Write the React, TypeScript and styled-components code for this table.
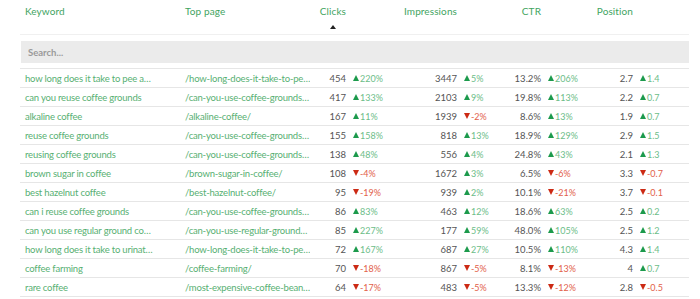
import React from "react";
import styled, { createGlobalStyle } from "styled-components";

const GlobalStyle = createGlobalStyle`
    body {
        margin: 0;
        background: #ffffff;
        font-family: Lato, "Open Sans", sans-serif;
    }
`;

const cols = "160px 130px 40px 55px 56px 44px 40px 50px 42px 52px";

const Wrapper = styled.div`
    width: 669px;
    margin-left: 20px;
`;

const HeaderRow = styled.div`
    display: grid;
    grid-template-columns: ${cols};
    height: 35px;
    border-bottom: 1px solid #f0f0f0;
    box-sizing: border-box;
`;

const HeadCell = styled.div<{ $right?: boolean }>`
    padding: 5px ${(p) => (p.$right ? "4px" : "5px")} 0 5px;
    font-size: 10px;
    letter-spacing: 0.1px;
    color: #3fa45f;
    white-space: nowrap;
    display: flex;
    flex-direction: column;
    align-items: ${(p) => (p.$right ? "flex-end" : "flex-start")};
`;

const SortArrow = styled.span`
    align-self: flex-end;
    margin-top: 8px;
    margin-right: 10px;
    width: 0;
    height: 0;
    border-left: 3px solid transparent;
    border-right: 3px solid transparent;
    border-bottom: 4px solid #222;
`;

const SearchBox = styled.input`
    display: block;
    width: 668px;
    height: 22px;
    margin: 6px 0 5px 1px;
    box-sizing: border-box;
    border: none;
    background: #ebebeb;
    padding: 0 7px;
    font-family: inherit;
    font-size: 9.5px;
    font-weight: 700;
    color: #555;
    outline: none;
    &::placeholder {
        color: #9a9a9a;
    }
`;

const Row = styled.div`
    display: grid;
    grid-template-columns: ${cols};
    height: 19px;
    border-top: 1px solid #e6e6e6;
    box-sizing: border-box;
    align-items: center;
    font-size: 9.5px;
    &:last-child {
        border-bottom: 1px solid #e6e6e6;
        height: 20px;
    }
`;

const TextCell = styled.div`
    padding-left: 5px;
    color: #58b073;
    white-space: nowrap;
    overflow: hidden;
    letter-spacing: -0.2px;
`;

const NumCell = styled.div`
    text-align: right;
    padding-right: 4px;
    color: #555;
    white-space: nowrap;
`;

const Change = styled.div<{ $down?: boolean }>`
    padding-left: 3px;
    color: ${(p) => (p.$down ? "#e2604a" : "#6cbd88")};
    white-space: nowrap;
    display: flex;
    align-items: center;
    font-size: 9px;
`;

const Tri = styled.span<{ $down?: boolean }>`
    width: 0;
    height: 0;
    margin-right: 1px;
    border-left: 3px solid transparent;
    border-right: 3px solid transparent;
    ${(p) =>
        p.$down
            ? "border-top: 6px solid #cc2a14;"
            : "border-bottom: 6px solid #1c9a4c;"}
`;

interface RowData {
    kw: string;
    page: string;
    clicks: string;
    dClicks: string;
    impr: string;
    dImpr: string;
    ctr: string;
    dCtr: string;
    pos: string;
    dPos: string;
}

const rows: RowData[] = [
    { kw: "how long does it take to pee a…", page: "/how-long-does-it-take-to-pe…", clicks: "454", dClicks: "220%", impr: "3447", dImpr: "5%", ctr: "13.2%", dCtr: "206%", pos: "2.7", dPos: "1.4" },
    { kw: "can you reuse coffee grounds", page: "/can-you-use-coffee-grounds…", clicks: "417", dClicks: "133%", impr: "2103", dImpr: "9%", ctr: "19.8%", dCtr: "113%", pos: "2.2", dPos: "0.7" },
    { kw: "alkaline coffee", page: "/alkaline-coffee/", clicks: "167", dClicks: "11%", impr: "1939", dImpr: "-2%", ctr: "8.6%", dCtr: "13%", pos: "1.9", dPos: "0.7" },
    { kw: "reuse coffee grounds", page: "/can-you-use-coffee-grounds…", clicks: "155", dClicks: "158%", impr: "818", dImpr: "13%", ctr: "18.9%", dCtr: "129%", pos: "2.9", dPos: "1.5" },
    { kw: "reusing coffee grounds", page: "/can-you-use-coffee-grounds…", clicks: "138", dClicks: "48%", impr: "556", dImpr: "4%", ctr: "24.8%", dCtr: "43%", pos: "2.1", dPos: "1.3" },
    { kw: "brown sugar in coffee", page: "/brown-sugar-in-coffee/", clicks: "108", dClicks: "-4%", impr: "1672", dImpr: "3%", ctr: "6.5%", dCtr: "-6%", pos: "3.3", dPos: "-0.7" },
    { kw: "best hazelnut coffee", page: "/best-hazelnut-coffee/", clicks: "95", dClicks: "-19%", impr: "939", dImpr: "2%", ctr: "10.1%", dCtr: "-21%", pos: "3.7", dPos: "-0.1" },
    { kw: "can i reuse coffee grounds", page: "/can-you-use-coffee-grounds…", clicks: "86", dClicks: "83%", impr: "463", dImpr: "12%", ctr: "18.6%", dCtr: "63%", pos: "2.5", dPos: "0.2" },
    { kw: "can you use regular ground co…", page: "/can-you-use-regular-ground…", clicks: "85", dClicks: "227%", impr: "177", dImpr: "59%", ctr: "48.0%", dCtr: "105%", pos: "2.5", dPos: "1.2" },
    { kw: "how long does it take to urinat…", page: "/how-long-does-it-take-to-pe…", clicks: "72", dClicks: "167%", impr: "687", dImpr: "27%", ctr: "10.5%", dCtr: "110%", pos: "4.3", dPos: "1.4" },
    { kw: "coffee farming", page: "/coffee-farming/", clicks: "70", dClicks: "-18%", impr: "867", dImpr: "-5%", ctr: "8.1%", dCtr: "-13%", pos: "4", dPos: "0.7" },
    { kw: "rare coffee", page: "/most-expensive-coffee-bean…", clicks: "64", dClicks: "-17%", impr: "483", dImpr: "-5%", ctr: "13.3%", dCtr: "-12%", pos: "2.8", dPos: "-0.5" },
];

function Delta({ value }: { value: string }) {
    const down = value.startsWith("-");
    return (
        <Change $down={down}>
            <Tri $down={down} />
            {value}
        </Change>
    );
}

export default function App() {
    return (
        <Wrapper>
            <GlobalStyle />
            <HeaderRow>
                <HeadCell>Keyword</HeadCell>
                <HeadCell>Top page</HeadCell>
                <HeadCell $right>
                    Clicks
                    <SortArrow />
                </HeadCell>
                <HeadCell />
                <HeadCell $right>Impressions</HeadCell>
                <HeadCell />
                <HeadCell $right>CTR</HeadCell>
                <HeadCell />
                <HeadCell $right>Position</HeadCell>
                <HeadCell />
            </HeaderRow>
            <SearchBox placeholder="Search..." />
            <div>
                {rows.map((r) => (
                    <Row key={r.kw}>
                        <TextCell>{r.kw}</TextCell>
                        <TextCell>{r.page}</TextCell>
                        <NumCell>{r.clicks}</NumCell>
                        <Delta value={r.dClicks} />
                        <NumCell>{r.impr}</NumCell>
                        <Delta value={r.dImpr} />
                        <NumCell>{r.ctr}</NumCell>
                        <Delta value={r.dCtr} />
                        <NumCell>{r.pos}</NumCell>
                        <Delta value={r.dPos} />
                    </Row>
                ))}
            </div>
        </Wrapper>
    );
}
